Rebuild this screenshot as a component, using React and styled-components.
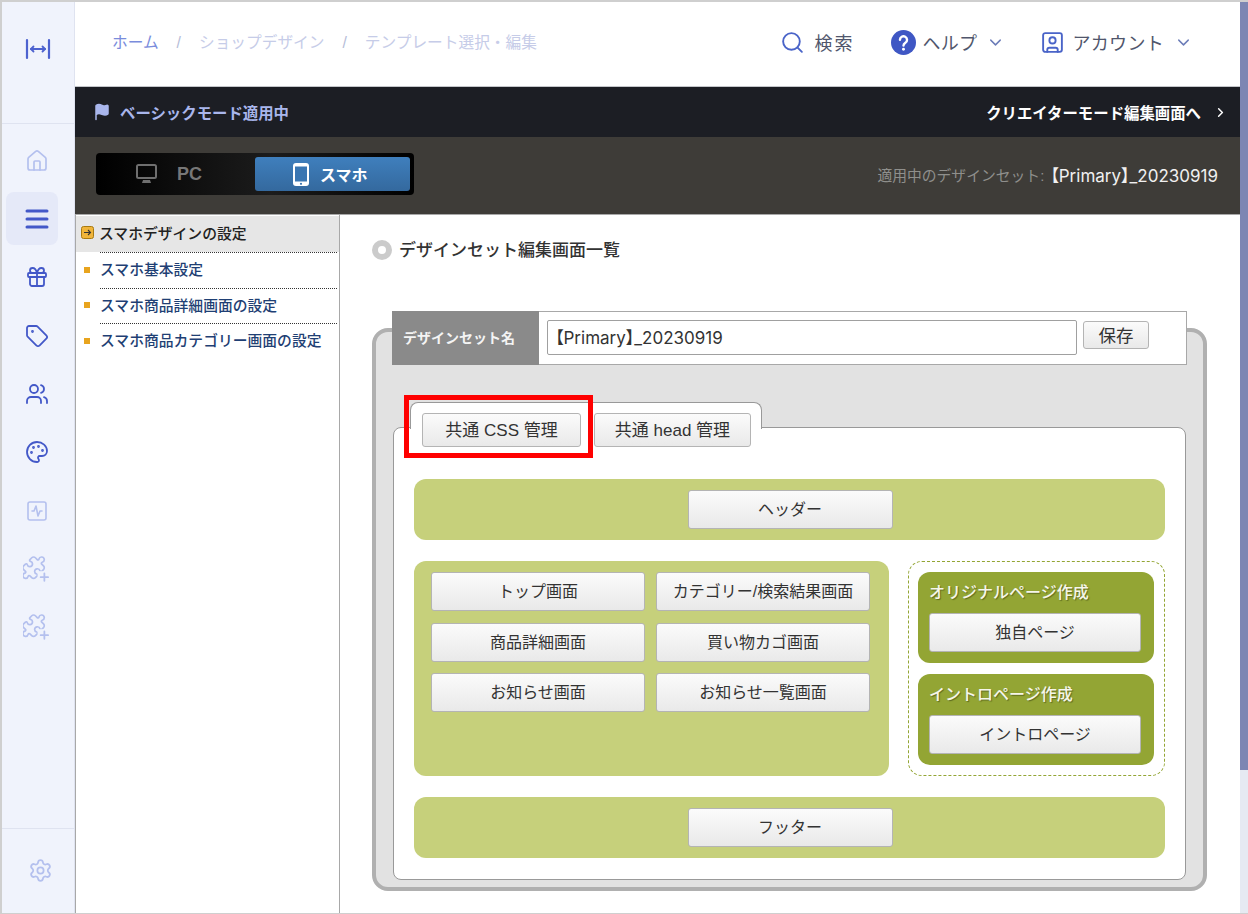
import React from "react";
import styled, { createGlobalStyle } from "styled-components";
import {
  ChevronDown,
  ChevronRight,
  Flag,
  Gift,
  House,
  Palette,
  Search,
  Settings,
  SquareActivity,
  SquareUser,
  Tag,
  Users,
} from "lucide-react";

const JP = `"Liberation Sans", "Noto Sans CJK JP", sans-serif`;

const GlobalStyle = createGlobalStyle`
  html, body {
    margin: 0;
    height: 100%;
    overflow: hidden;
    background: #fff;
  }
  * { box-sizing: border-box; }
`;

const PuzzlePlus = () => (
  <svg width="27" height="27" viewBox="0 0 24 24" fill="none" stroke="currentColor" strokeWidth="1.6" strokeLinecap="round" strokeLinejoin="round">
    <path d="M15.39 4.39a1 1 0 0 0 1.68-.474 2.5 2.5 0 1 1 3.014 3.015 1 1 0 0 0-.474 1.68l1.683 1.682a2.414 2.414 0 0 1 0 3.414L19.61 15.39a1 1 0 0 1-1.68-.474 2.5 2.5 0 1 0-3.014 3.015 1 1 0 0 1 .474 1.68l-1.683 1.682a2.414 2.414 0 0 1-3.414 0L8.61 19.61a1 1 0 0 0-1.68.474 2.5 2.5 0 1 1-3.014-3.015 1 1 0 0 0 .474-1.68l-1.683-1.682a2.414 2.414 0 0 1 0-3.414L4.39 8.61a1 1 0 0 1 1.68.474 2.5 2.5 0 1 0 3.014-3.015 1 1 0 0 1-.474-1.68l1.683-1.682a2.414 2.414 0 0 1 3.414 0z" transform="translate(-2 -1) scale(0.95)" />
    <rect x="13" y="13.5" width="11" height="10.5" fill="#f0f3fc" stroke="none" />
    <path d="M19 15.5v6.5M15.7 18.8h6.6" />
  </svg>
);

const WidthLogo = () => (
  <svg width="26" height="22" viewBox="0 0 26 22" fill="none" stroke="#4d62cf" strokeWidth="2.2" strokeLinecap="round" strokeLinejoin="round">
    <path d="M2 2v18M24 2v18M6 11h14" />
    <path d="M8.5 8.5 6 11l2.5 2.5M17.5 8.5 20 11l-2.5 2.5" strokeWidth="1.8" />
  </svg>
);

const MenuBars = () => (
  <svg width="24" height="22" viewBox="0 0 24 22" fill="none" stroke="#4358c8" strokeWidth="3" strokeLinecap="round">
    <path d="M2 3h20M2 11h20M2 19h20" />
  </svg>
);

const HelpDot = () => (
  <svg width="25" height="25" viewBox="0 0 24 24">
    <circle cx="12" cy="12" r="12" fill="#3f57c4" />
    <path d="M8.6 9.4a3.4 3.4 0 1 1 5.2 2.9c-1.2.8-1.8 1.3-1.8 2.6" fill="none" stroke="#fff" strokeWidth="2.3" strokeLinecap="round" />
    <circle cx="12" cy="18.4" r="1.4" fill="#fff" />
  </svg>
);

const DesktopIcon = () => (
  <svg width="21" height="20" viewBox="0 0 21 20">
    <rect x="1" y="1" width="19" height="13" rx="1.5" fill="none" stroke="#6f6f6f" strokeWidth="2" />
    <path d="M7 16h7l1 3H6z" fill="#6f6f6f" />
  </svg>
);

const PhoneIcon = () => (
  <svg width="16" height="23" viewBox="0 0 16 23">
    <rect width="16" height="23" rx="3" fill="#fff" />
    <rect x="2" y="3.5" width="12" height="15" fill="#3a76b2" />
    <circle cx="8" cy="20.8" r="1.1" fill="#3a76b2" />
  </svg>
);

const ArrowBadge = () => (
  <svg width="13" height="13" viewBox="0 0 13 13">
    <rect x="0.5" y="0.5" width="12" height="12" rx="2" fill="#f0b53a" stroke="#a87a10" />
    <path d="M3 6.5h6M7 4l2.5 2.5L7 9" fill="none" stroke="#333" strokeWidth="1.1" />
  </svg>
);

const sideItems = [
  { icon: <House size={24} strokeWidth={1.7} /> },
  { icon: <MenuBars />, active: true, strong: true },
  { icon: <Gift size={24} strokeWidth={1.8} />, strong: true },
  { icon: <Tag size={24} strokeWidth={1.8} />, strong: true },
  { icon: <Users size={24} strokeWidth={1.8} />, strong: true },
  { icon: <Palette size={24} strokeWidth={1.8} />, strong: true },
  { icon: <SquareActivity size={24} strokeWidth={1.6} /> },
  { icon: <PuzzlePlus /> },
  { icon: <PuzzlePlus /> },
];

const navItems = [
  "スマホ基本設定",
  "スマホ商品詳細画面の設定",
  "スマホ商品カテゴリー画面の設定",
];

const pageButtons = [
  "トップ画面",
  "カテゴリー/検索結果画面",
  "商品詳細画面",
  "買い物カゴ画面",
  "お知らせ画面",
  "お知らせ一覧画面",
];

export default function App() {
  return (
    <>
      <GlobalStyle />
      <Frame>
        <Sidebar>
          <SideTop>
            <WidthLogo />
          </SideTop>
          <SideList>
            {sideItems.map((item, i) => (
              <SideItem key={i} $active={item.active} $strong={item.strong}>
                {item.icon}
              </SideItem>
            ))}
          </SideList>
          <SideBottom>
            <Settings size={25} strokeWidth={1.7} />
          </SideBottom>
        </Sidebar>

        <Main>
          <TopBar>
            <Breadcrumb>
              <Crumb $home>ホーム</Crumb>
              <Slash>/</Slash>
              <Crumb>ショップデザイン</Crumb>
              <Slash>/</Slash>
              <Crumb>テンプレート選択・編集</Crumb>
            </Breadcrumb>
            <TopActions>
              <TopAction $gap={10} $width={111}>
                <Search size={25} strokeWidth={1.8} color="#4a64c8" />
                <TopLabel $spaced>検索</TopLabel>
              </TopAction>
              <TopAction $gap={7} $width={149}>
                <HelpDot />
                <TopLabel>ヘルプ</TopLabel>
                <Chevron><ChevronDown size={19} strokeWidth={1.8} /></Chevron>
              </TopAction>
              <TopAction $gap={8} $width={0}>
                <SquareUser size={25} strokeWidth={1.8} color="#4a64c8" />
                <TopLabel>アカウント</TopLabel>
                <Chevron><ChevronDown size={19} strokeWidth={1.8} /></Chevron>
              </TopAction>
            </TopActions>
          </TopBar>

          <ModeBar>
            <ModeLabel>
              <Flag size={18} fill="#a9b6ec" color="#a9b6ec" />
              ベーシックモード適用中
            </ModeLabel>
            <CreatorLink>
              クリエイターモード編集画面へ
              <ChevronRight size={15} strokeWidth={2.4} />
            </CreatorLink>
          </ModeBar>

          <DeviceBar>
            <DeviceSwitch>
              <DeviceTab>
                <DesktopIcon />
                PC
              </DeviceTab>
              <DeviceTab $active>
                <PhoneIcon />
                スマホ
              </DeviceTab>
            </DeviceSwitch>
            <AppliedSet>
              適用中のデザインセット:<AppliedName>【Primary】_20230919</AppliedName>
            </AppliedSet>
          </DeviceBar>

          <Body>
            <SideNav>
              <NavHead>
                <ArrowBadge />
                スマホデザインの設定
              </NavHead>
              {navItems.map((label) => (
                <NavRow key={label}>
                  <NavBullet />
                  <NavText>{label}</NavText>
                </NavRow>
              ))}
            </SideNav>

            <Content>
              <Heading>
                <HeadingDot />
                <HeadingText>デザインセット編集画面一覧</HeadingText>
              </Heading>

              <Panel>
                <NameRow>
                  <NameLabel>デザインセット名</NameLabel>
                  <NameField>
                    <NameInput defaultValue="【Primary】_20230919" />
                    <SaveButton>保存</SaveButton>
                  </NameField>
                </NameRow>

                <InnerBox>
                  <TabStrip>
                    <Highlight />
                    <TabButton $width={159}>共通 CSS 管理</TabButton>
                    <TabButton $width={157}>共通 head 管理</TabButton>
                  </TabStrip>

                  <GreenBar>
                    <PartButton $width={205}>ヘッダー</PartButton>
                  </GreenBar>

                  <MiddleRow>
                    <PagesPane>
                      {pageButtons.map((label) => (
                        <PartButton key={label}>{label}</PartButton>
                      ))}
                    </PagesPane>
                    <DashedPane>
                      <CreateCard>
                        <CardTitle>オリジナルページ作成</CardTitle>
                        <PartButton>独自ページ</PartButton>
                      </CreateCard>
                      <CreateCard>
                        <CardTitle>イントロページ作成</CardTitle>
                        <PartButton>イントロページ</PartButton>
                      </CreateCard>
                    </DashedPane>
                  </MiddleRow>

                  <GreenBar>
                    <PartButton $width={205}>フッター</PartButton>
                  </GreenBar>
                </InnerBox>
              </Panel>
            </Content>
          </Body>
        </Main>

        <Scrollbar>
          <ScrollThumb />
        </Scrollbar>
      </Frame>
    </>
  );
}

const Frame = styled.div`
  width: 1248px;
  height: 914px;
  display: flex;
  border-top: 2px solid #cfcfcf;
  border-left: 2px solid #cfcfcf;
  border-bottom: 1px solid #cfcfcf;
  font-family: ${JP};
  overflow: hidden;
`;

const Sidebar = styled.aside`
  width: 73px;
  flex: none;
  display: flex;
  flex-direction: column;
  background: #f0f3fc;
  border-right: 1px solid #dfe3f0;
`;

const SideTop = styled.div`
  height: 122px;
  display: flex;
  align-items: flex-start;
  justify-content: center;
  padding-top: 36px;
  border-bottom: 1px solid #dfe3f0;
`;

const SideList = styled.nav`
  flex: 1;
  display: flex;
  flex-direction: column;
  padding: 10px 0 0 4px;
`;

const SideItem = styled.div`
  width: 52px;
  height: 53px;
  margin-bottom: 5.4px;
  padding-left: 9px;
  display: flex;
  align-items: center;
  justify-content: center;
  border-radius: 8px;
  background: ${(p) => (p.$active ? "#e5e9f8" : "transparent")};
  color: ${(p) => (p.$strong ? "#4358c8" : "#b4c0ee")};
`;

const SideBottom = styled.div`
  height: 85px;
  display: flex;
  align-items: center;
  justify-content: center;
  padding: 0 0 1px 4px;
  border-top: 1px solid #dfe3f0;
  color: #b4c0ee;
`;

const Main = styled.div`
  width: 1165px;
  flex: none;
  display: flex;
  flex-direction: column;
`;

const TopBar = styled.header`
  height: 85px;
  display: flex;
  justify-content: space-between;
  padding: 29px 0 0 37px;
  background: #fff;
  border-bottom: 1px solid #c4c6ca;
`;

const Breadcrumb = styled.div`
  display: flex;
  align-items: flex-start;
  font-size: 15.7px;
  line-height: 24px;
`;

const Crumb = styled.span`
  color: ${(p) => (p.$home ? "#7a8cdc" : "#c6cce8")};
`;

const Slash = styled.span`
  color: #b6bdd8;
  margin: 0 18px;
`;

const TopActions = styled.div`
  display: flex;
  align-items: flex-start;
  margin: -3px 47px 0 0;
`;

const TopAction = styled.div`
  display: flex;
  align-items: center;
  gap: ${(p) => p.$gap}px;
  height: 28px;
  ${(p) => (p.$width ? `width: ${p.$width}px;` : "")}
`;

const TopLabel = styled.span`
  font-size: 18px;
  letter-spacing: ${(p) => (p.$spaced ? "2px" : "0.3px")};
  color: #50566c;
`;

const Chevron = styled.span`
  display: flex;
  color: #6b7cb8;
  margin-left: 2px;
`;

const ModeBar = styled.div`
  height: 50px;
  display: flex;
  align-items: center;
  justify-content: space-between;
  padding: 0 12px 0 18px;
  background: #1c1e24;
`;

const ModeLabel = styled.div`
  display: flex;
  align-items: center;
  gap: 9px;
  font-size: 15.4px;
  font-weight: 700;
  color: #a9b6ec;
`;

const CreatorLink = styled.div`
  display: flex;
  align-items: center;
  gap: 12px;
  font-size: 15.4px;
  font-weight: 700;
  color: #fff;
`;

const DeviceBar = styled.div`
  height: 78px;
  display: flex;
  align-items: flex-start;
  justify-content: space-between;
  padding: 16px 22px 0 21px;
  background: #3e3c38;
  border-bottom: 1px solid #a8a8a8;
`;

const DeviceSwitch = styled.div`
  width: 318px;
  height: 42px;
  display: flex;
  justify-content: space-between;
  padding: 4px;
  border-radius: 4px;
  background: linear-gradient(to right, #000 0%, #1c1c1c 55%, #000 100%);
`;

const DeviceTab = styled.div`
  width: 155px;
  display: flex;
  align-items: center;
  gap: ${(p) => (p.$active ? "11px" : "20px")};
  padding-left: ${(p) => (p.$active ? "38px" : "36px")};
  border-radius: 3px;
  font-size: ${(p) => (p.$active ? "16px" : "18px")};
  font-weight: 700;
  color: ${(p) => (p.$active ? "#fff" : "#777")};
  background: ${(p) => (p.$active ? "linear-gradient(#3f7fbd, #34699e)" : "transparent")};
`;

const AppliedSet = styled.div`
  display: flex;
  align-items: center;
  height: 24px;
  margin-top: 9px;
  font-size: 14.8px;
  color: #8f8f8c;
`;

const AppliedName = styled.span`
  margin-left: 6px;
  font-family: Inter, "Noto Sans CJK JP", sans-serif;
  font-size: 17px;
  font-feature-settings: "palt";
  color: #f0f0f0;
`;

const Body = styled.div`
  flex: 1;
  display: flex;
  background: #fff;
`;

const SideNav = styled.div`
  width: 265px;
  flex: none;
  border-left: 1px solid #a8a8a8;
  border-right: 1px solid #a8a8a8;
  padding-top: 1px;
`;

const NavHead = styled.div`
  height: 36px;
  display: flex;
  align-items: center;
  gap: 5px;
  padding: 0 0 3px 5px;
  font-size: 14.8px;
  font-weight: 500;
  color: #222;
  background: #e6e6e6;
`;

const NavRow = styled.div`
  height: 35.5px;
  display: flex;
  align-items: center;
  gap: 10px;
  padding-left: 8px;
`;

const NavBullet = styled.span`
  width: 6px;
  height: 6px;
  flex: none;
  background: #e8a41e;
`;

const NavText = styled.span`
  flex: 1;
  height: 100%;
  display: flex;
  align-items: center;
  margin-right: 2px;
  padding-bottom: 3px;
  font-size: 14.8px;
  font-weight: 500;
  color: #1f3f74;
  border-top: 1px dotted #333;
`;

const Content = styled.main`
  flex: 1;
  padding: 19px 0 0 32px;
`;

const Heading = styled.h2`
  display: flex;
  align-items: center;
  gap: 7px;
  margin: 0;
  height: 30px;
  font-size: 17px;
  font-weight: 500;
  line-height: 24px;
  color: #333;
`;

const HeadingText = styled.span`
  padding-top: 3px;
`;

const HeadingDot = styled.span`
  width: 20px;
  height: 20px;
  margin-top: 2px;
  border: 6px solid #cbcbcb;
  border-radius: 50%;
  background: #fff;
`;

const Panel = styled.section`
  width: 835px;
  height: 563px;
  margin-top: 64px;
  padding: 0 17px 7px;
  border: 4px solid #b0b0b0;
  border-radius: 16px;
  background: #e2e2e2;
`;

const NameRow = styled.div`
  width: 795px;
  height: 54px;
  display: flex;
  margin: -21px 0 0 -1px;
  border: 1px solid #a8a8a8;
  background: #fff;
`;

const NameLabel = styled.div`
  width: 147px;
  margin: -1px 0 -1px -1px;
  display: flex;
  align-items: center;
  padding: 0 0 3px 11px;
  font-size: 14px;
  font-weight: 700;
  color: #f4f4f4;
  background: #8a8a8a;
`;

const NameField = styled.div`
  flex: 1;
  display: flex;
  align-items: flex-start;
  gap: 6px;
  padding: 8px 0 0 8px;
`;

const NameInput = styled.input`
  width: 530px;
  height: 35px;
  padding: 0 5px 2px 7px;
  border: 1px solid #a0a0a0;
  border-radius: 2px;
  font-family: Inter, "Noto Sans CJK JP", sans-serif;
  font-size: 17px;
  font-feature-settings: "palt";
  color: #333;
  outline: none;
`;

const buttonLook = `
  border: 1px solid #b4b4b4;
  border-radius: 3px;
  background: linear-gradient(#fbfbfb, #e9e9e9);
  color: #333;
  font-family: ${JP};
  padding: 0 0 3px;
  white-space: nowrap;
`;

const SaveButton = styled.button`
  ${buttonLook}
  width: 66px;
  height: 28px;
  margin-top: 1px;
  font-size: 17.5px;
`;

const InnerBox = styled.div`
  height: 453px;
  margin-top: 62px;
  padding: 0 20px;
  border: 1px solid #999;
  border-radius: 8px;
  background: #fff;
`;

const TabStrip = styled.div`
  position: relative;
  width: 352px;
  height: 27px;
  display: flex;
  align-items: flex-start;
  gap: 13px;
  margin: -26px 0 50px -4px;
  padding: 10px 0 0 11px;
  border: 1px solid #999;
  border-bottom: none;
  border-radius: 8px 8px 0 0;
  background: #fff;
`;

const Highlight = styled.div`
  position: absolute;
  left: -7px;
  top: -8px;
  width: 189px;
  height: 63px;
  border: 5px solid #f00;
  pointer-events: none;
`;

const TabButton = styled.button`
  ${buttonLook}
  flex: none;
  width: ${(p) => p.$width}px;
  height: 34px;
  font-size: 17px;
`;

const GreenBar = styled.div`
  height: 61px;
  display: flex;
  align-items: center;
  justify-content: center;
  padding-left: 1px;
  border-radius: 12px;
  background: #c6d07b;
`;

const PartButton = styled.button`
  ${buttonLook}
  width: ${(p) => (p.$width ? `${p.$width}px` : "100%")};
  height: 39px;
  font-size: 16px;
`;

const MiddleRow = styled.div`
  display: flex;
  justify-content: space-between;
  height: 215px;
  margin: 21px 0;
`;

const PagesPane = styled.div`
  width: 475px;
  display: grid;
  grid-template-columns: 214px 214px;
  grid-auto-rows: 39px;
  column-gap: 11px;
  row-gap: 11.5px;
  padding: 11px 0 11px 17px;
  border-radius: 12px;
  background: #c6d07b;
`;

const DashedPane = styled.div`
  width: 257px;
  display: flex;
  flex-direction: column;
  gap: 11px;
  padding: 10px 10px 10px 9px;
  border: 1px dashed #93a534;
  border-radius: 14px;
`;

const CreateCard = styled.div`
  height: 91px;
  padding: 0 13px 0 11px;
  border-radius: 12px;
  background: #93a534;
`;

const CardTitle = styled.div`
  height: 41px;
  display: flex;
  align-items: center;
  padding-bottom: 3px;
  font-size: 16px;
  font-weight: 500;
  color: #f6f6ea;
  text-shadow: 1px 1px 1px #5f6c20;
`;

const Scrollbar = styled.div`
  width: 8px;
  flex: none;
  background: #e6eaf2;
`;

const ScrollThumb = styled.div`
  height: 768px;
  background: #7c86b3;
`;
